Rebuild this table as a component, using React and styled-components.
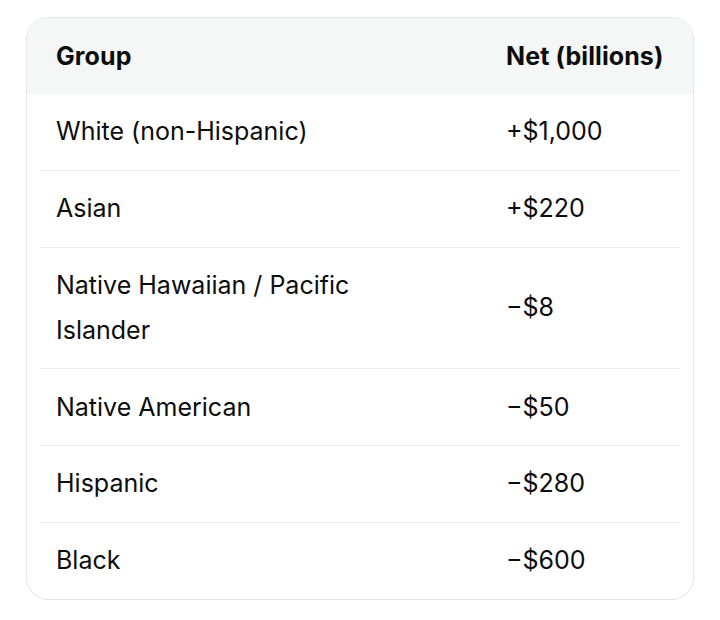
import React from 'react';
import styled, { createGlobalStyle } from 'styled-components';

const GlobalStyle = createGlobalStyle`
  html, body {
    margin: 0;
    padding: 0;
    background: #ffffff;
  }
  body {
    font-family: Inter, "Noto Sans", "Liberation Sans", sans-serif;
    color: #0d0d0d;
  }
`;

const Page = styled.main`
  padding: 17px 26px 0;
`;

const Card = styled.div`
  border: 1px solid #e6e6e6;
  border-radius: 22px;
  overflow: hidden;
  background: #fff;
`;

const Table = styled.div`
  display: grid;
  grid-template-columns: 1fr 203px;
`;

const HeadRow = styled.div`
  display: contents;
`;

const HeadCell = styled.div`
  background: #f5f6f6;
  font-weight: 700;
  font-size: 25px;
  letter-spacing: 0.1px;
  line-height: 44px;
  padding: 16px 0 16px ${(p) => (p.first ? '29px' : '16px')};
  white-space: nowrap;
`;

const Row = styled.div`
  display: contents;
`;

const Cell = styled.div`
  font-size: 25px;
  line-height: 45px;
  padding: ${(p) => (p.first ? '15.25px 70px 15.5px 16px' : '15.25px 0 15.5px 16px')};
  margin: ${(p) => (p.first ? '0 0 0 13px' : '0 13px 0 0')};
  border-top: ${(p) => (p.divider ? '1px solid #ececec' : 'none')};
  display: flex;
  align-items: center;
`;

const rows = [
  ['White (non-Hispanic)', '+$1,000'],
  ['Asian', '+$220'],
  ['Native Hawaiian / Pacific Islander', '\u2212$8'],
  ['Native American', '\u2212$50'],
  ['Hispanic', '\u2212$280'],
  ['Black', '\u2212$600'],
];

export default function App() {
  return (
    <>
      <GlobalStyle />
      <Page>
        <Card>
          <Table>
            <HeadRow>
              <HeadCell first>Group</HeadCell>
              <HeadCell>Net (billions)</HeadCell>
            </HeadRow>
            {rows.map(([group, net], i) => (
              <Row key={group}>
                <Cell first divider={i > 0}>{group}</Cell>
                <Cell divider={i > 0}>{net}</Cell>
              </Row>
            ))}
          </Table>
        </Card>
      </Page>
    </>
  );
}
